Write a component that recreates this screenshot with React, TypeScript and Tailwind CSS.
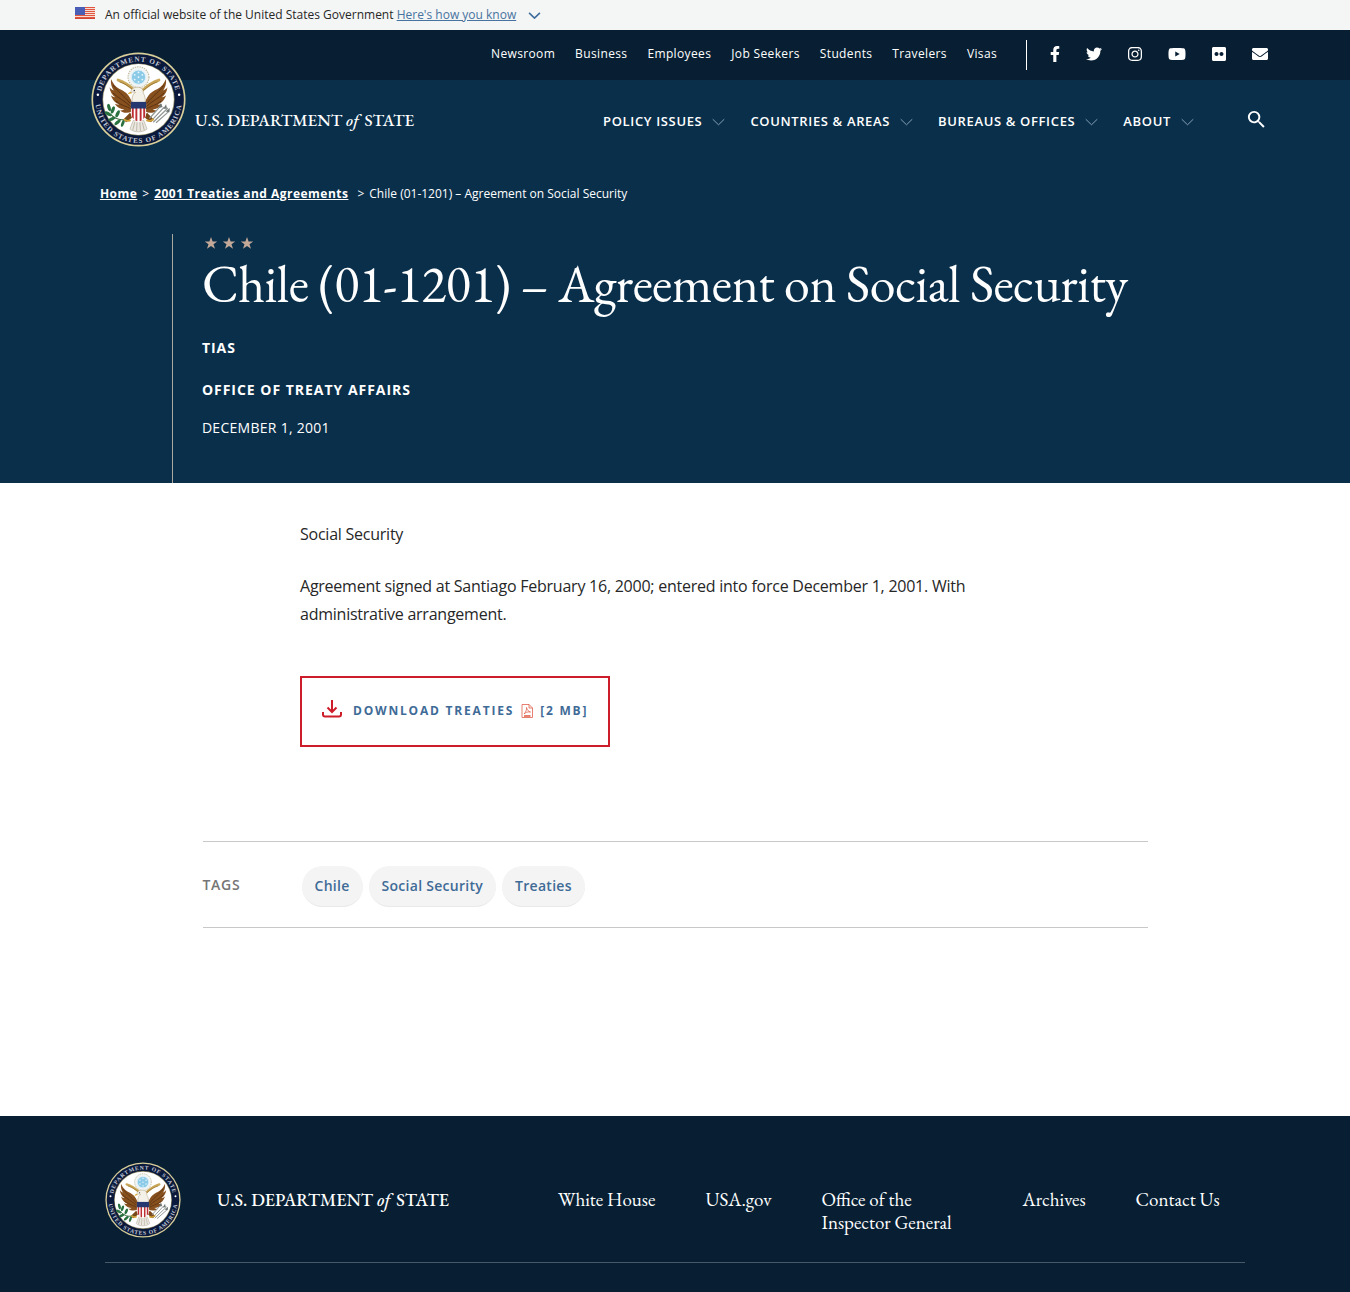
import React, { useId } from "react";
import { FaFacebookF, FaTwitter, FaInstagram, FaYoutube, FaFlickr, FaEnvelope } from "react-icons/fa";
import { MdSearch } from "react-icons/md";

const serif = "font-['EB_Garamond','Liberation_Serif',serif]";

function Flag() {
  return (
    <svg viewBox="0 0 20 12" className="mb-1 h-3 w-5 shrink-0" aria-hidden="true">
      <rect width="20" height="12" fill="#f6dcd4" />
      {[0, 2, 4, 6, 8, 10].map((y) => (
        <rect key={y} y={y} width="20" height="1" fill="#e0563f" />
      ))}
      <rect y="11" width="20" height="1" fill="#cf4436" />
      <rect width="10" height="8" fill="#3a4fae" />
      {[1, 3, 5, 7].map((y) =>
        [1, 3, 5, 7, 9].map((x) => <circle key={`${x}-${y}`} cx={x} cy={y} r="0.4" fill="#cfd6f5" />)
      )}
    </svg>
  );
}

function Chevron({ className, width = 1 }: { className: string; width?: number }) {
  return (
    <svg viewBox="0 0 14 8" className={className} fill="none" stroke="currentColor" strokeWidth={width} aria-hidden="true">
      <path d="M.8 1 7 7l6.200-6" />
    </svg>
  );
}

function Seal({ className }: { className: string }) {
  const id = useId();
  const wing =
    "M88 112C84 96 76 84 60 78 52 74 46 66 42 57 41 68 44 76 48 81 43 79 41 77 39 74 40 84 45 91 51 95 47 95 44 93 42 91 45 101 52 108 59 110 56 111 53 110 50 109 55 117 63 121 70 121 67 123 64 123 61 123 68 129 78 129 86 125Z";
  const feathers = "M47 70C56 84 68 90 84 110M46 86C58 98 70 102 85 116M52 103C62 112 74 114 85 120";
  return (
    <svg viewBox="0 0 200 200" className={className} role="img" aria-label="Seal of the U.S. Department of State">
      <circle cx="100" cy="100" r="99" fill="#d9cf9a" />
      <circle cx="100" cy="100" r="95.500" fill="#0b1a3c" />
      <circle cx="100" cy="100" r="76" fill="#8b865f" />
      <circle cx="100" cy="100" r="74.500" fill="#fff" />
      <defs>
        <path id={`${id}t`} d="M20 100A80 80 0 0 1 180 100" />
        <path id={`${id}b`} d="M9.400 92A91 91 0 1 0 190.600 92" />
      </defs>
      <g fill="#c3cad8" fontFamily="Liberation Serif, serif" fontWeight="700" fontSize="15" textAnchor="middle">
        <text letterSpacing="2">
          <textPath href={`#${id}t`} startOffset="50%">DEPARTMENT OF STATE</textPath>
        </text>
        <text letterSpacing="2">
          <textPath href={`#${id}b`} startOffset="50%">UNITED STATES OF AMERICA</textPath>
        </text>
      </g>
      <circle cx="14.500" cy="90" r="2.600" fill="#fff" />
      <circle cx="185.500" cy="90" r="2.600" fill="#fff" />
      <circle cx="100" cy="53" r="22" fill="#f1f4f4" stroke="#c3bda0" strokeWidth="2.500" strokeDasharray="3 2" />
      <circle cx="100" cy="53" r="15" fill="#8ccbe8" stroke="#dff1f9" strokeWidth="2" />
      <g fill="#e9f6fc">
        {[[100, 43], [92, 48], [108, 48], [100, 53], [92, 58], [108, 58], [100, 63]].map(([x, y]) => (
          <circle key={`${x}-${y}`} cx={x} cy={y} r="1.900" />
        ))}
      </g>
      <path d="M57 59c10 3 21 9 34 21M143 59c-10 3-21 9-34 21" fill="none" stroke="#c9a757" strokeWidth="6" strokeLinecap="round" />
      <path d="M60 63c10 3 19 8 30 18M140 63c-10 3-19 8-30 18" fill="none" stroke="#8e6b2b" strokeWidth="1.500" />
      <g>
        <path d={wing} fill="#87501f" />
        <path d={feathers} fill="none" stroke="#5a3210" strokeWidth="2" />
        <g transform="translate(200 0) scale(-1 1)">
          <path d={wing} fill="#87501f" />
          <path d={feathers} fill="none" stroke="#5a3210" strokeWidth="2" />
        </g>
      </g>
      <path d="M82 128 68 142l6 6 16-12ZM118 128l14 14-6 6-16-12Z" fill="#7a4718" />
      <path d="M89 144h22l7 18c-9 8-27 8-36 0Z" fill="#ece9e2" stroke="#aaa493" strokeWidth="1.200" />
      <path d="M92 148l-4 16M97 148l-1 18M103 148l1 18M108 148l4 16" stroke="#aaa493" strokeWidth="1.500" />
      <path d="M87 108c-2-12 1-20 7-23-4 0-7-2-10 1-1-7 5-12 14-12 8 0 13 5 12 13 4 5 5 12 4 21Z" fill="#f4f1e8" stroke="#9f8e66" strokeWidth="1" />
      <path d="M84 84c-4 0-6 2-6 5 3-2 6-2 8-1Z" fill="#d9a520" />
      <circle cx="91" cy="81" r="1.500" fill="#222" />
      <path d="M84 107h32v23c0 10-8 15-16 18-8-3-16-8-16-18Z" fill="#fff" />
      <path d="M86 117v20l4 4v-24ZM93.500 117v27l4 2v-29ZM102.500 117v29l4-2v-27ZM110 117v24l4-4v-20Z" fill="#bd2f34" />
      <path d="M84 105h32v14H84Z" fill="#27376f" />
      <path d="M76 141c-14 4-25 1-35-10" fill="none" stroke="#3f6b3b" strokeWidth="2.500" />
      <g fill="#29713f">
        <ellipse cx="38" cy="117" rx="3.500" ry="8" transform="rotate(-15 38 117)" />
        <ellipse cx="46" cy="122" rx="3.500" ry="8" transform="rotate(20 46 122)" />
        <ellipse cx="36" cy="130" rx="3.500" ry="8" transform="rotate(-60 36 130)" />
        <ellipse cx="56" cy="130" rx="3.500" ry="8" transform="rotate(25 56 130)" />
        <ellipse cx="44" cy="141" rx="3.500" ry="8" transform="rotate(65 44 141)" />
        <ellipse cx="56" cy="148" rx="3.500" ry="8" transform="rotate(50 56 148)" />
        <ellipse cx="67" cy="150" rx="3" ry="8" transform="rotate(20 67 150)" />
      </g>
      <path d="M126 146l28-30M131 148l31-30M123 140l26-29M137 149l27-24" stroke="#8f9694" strokeWidth="2.500" />
      <path d="M146 108l5 8-8 2ZM158 110l2 9-8 1ZM166 118l-1 9-8-2Z" fill="#6f7776" />
      <path d="M70 142c4 3 8 4 12 2M118 144c4 2 9 1 13-2" fill="none" stroke="#d0a13a" strokeWidth="4" strokeLinecap="round" />
    </svg>
  );
}

function Wordmark({ size }: { size: string }) {
  return (
    <span className={`${serif} ${size} whitespace-nowrap font-medium leading-none`}>
      U.S. DEPARTMENT <i className="mr-0.5">of</i> STATE
    </span>
  );
}

const topLinks = ["Newsroom", "Business", "Employees", "Job Seekers", "Students", "Travelers", "Visas"];
const menus = ["POLICY ISSUES", "COUNTRIES & AREAS", "BUREAUS & OFFICES", "ABOUT"];
const social = [
  { label: "Facebook", icon: <FaFacebookF className="h-4 w-[10px]" /> },
  { label: "Twitter", icon: <FaTwitter className="h-4 w-4" /> },
  { label: "Instagram", icon: <FaInstagram className="h-4 w-[14px]" /> },
  { label: "YouTube", icon: <FaYoutube className="h-4 w-[18px]" /> },
  { label: "Flickr", icon: <FaFlickr className="h-4 w-[14px]" /> },
  { label: "Email", icon: <FaEnvelope className="h-4 w-4" /> },
];

function Header() {
  return (
    <header className="relative">
      <div className="bg-[#081f33]">
        <div className="mx-auto flex h-[50px] max-w-[1200px] items-center justify-end pr-[7px]">
          <nav aria-label="Audience" className="flex gap-5 pb-[2px] text-xs tracking-[0.03em]">
            {topLinks.map((t) => (
              <a key={t} href="#">{t}</a>
            ))}
          </nav>
          <div className="ml-[29px] flex h-[30px] items-center gap-[26px] border-l border-white pb-[2px] pl-[23px]">
            {social.map((s) => (
              <a key={s.label} href="#" aria-label={s.label}>{s.icon}</a>
            ))}
          </div>
        </div>
      </div>
      <div className="relative mx-auto flex h-[82px] max-w-[1200px] items-center justify-between pr-[7px]">
        <a href="#" className="pb-0.5 pl-[120px]">
          <Seal className="absolute -top-7 left-4 h-[95px] w-[95px]" />
          <Wordmark size="text-[17px]" />
        </a>
        <nav aria-label="Main" className="flex items-center gap-[25px] pt-0.5 text-[13px] font-semibold tracking-wider">
          {menus.map((m) => (
            <button key={m} type="button" className="flex items-center gap-[10px]">
              {m}
              <Chevron className="h-2 w-[13px] text-[#8fa9bd]" />
            </button>
          ))}
          <button type="button" aria-label="Search" className="ml-[26px] pb-1.5">
            <MdSearch className="h-[23px] w-[23px]" />
          </button>
        </nav>
      </div>
    </header>
  );
}

function Hero() {
  return (
    <section className="px-[7.4%]">
      <nav aria-label="Breadcrumb" className="flex h-16 items-center gap-[5px] text-xs">
        <a href="#" className="font-bold tracking-[0.04em] underline">Home</a>
        <span>&gt;</span>
        <a href="#" className="mr-1 font-bold tracking-[0.04em] underline">2001 Treaties and Agreements</a>
        <span>&gt;</span>
        <span>Chile (01-1201) – Agreement on Social Security</span>
      </nav>
      <div className="ml-[72px] mt-2 min-h-[249px] border-l border-[#a9a9a0] pl-[29px]">
        <svg viewBox="0 0 54 18" className="h-[18px] w-[54px] fill-[#c4a898]" aria-hidden="true">
          {[0, 18, 36].map((x) => (
            <path key={x} transform={`translate(${x} 0)`} d="M9 3l1.600 4.500h4.600l-3.700 2.700 1.500 4.600L9 12l-4 2.800 1.500-4.600L2.800 7.500h4.600Z" />
          ))}
        </svg>
        <h1 className={`${serif} text-[52px] leading-[64px] tracking-[-0.01em]`}>Chile (01-1201) – Agreement on Social Security</h1>
        <p className="mt-[22px] text-sm font-bold tracking-[0.07em]">TIAS</p>
        <p className="mt-[22px] text-sm font-bold tracking-[0.07em]">
          <a href="#">OFFICE OF TREATY AFFAIRS</a>
        </p>
        <p className="mt-[18px] text-sm tracking-[0.02em]">DECEMBER 1, 2001</p>
      </div>
    </section>
  );
}

function Download() {
  return (
    <a href="#" className="mt-12 inline-flex h-[71px] items-center border-2 border-[#cd1d2a] px-5 pb-[2px] text-xs font-bold tracking-[0.15em] text-[#3f6b97]">
      <svg viewBox="0 0 20 18" className="mb-1 mr-[11px] h-[18px] w-5" fill="none" stroke="#cd1d2a" strokeWidth="2" aria-hidden="true">
        <path d="M10 0v12M5.500 7.500 10 12l4.500-4.500M1 12v2.500A2 2 0 0 0 3 16.500h14a2 2 0 0 0 2-2V12" />
      </svg>
      DOWNLOAD TREATIES
      <svg viewBox="0 0 12 14" className="mx-[7px] h-[14px] w-3" fill="none" stroke="#e0614d" aria-hidden="true">
        <path d="M1 .5h7l3.500 3.500v9.500H1ZM8 .5V4h3.500" strokeWidth=".8" />
        <path d="M5.500 3.500c1 3 2 4 4 4.500-3-.5-5 .5-6.500 2C4.500 8.500 6 5.500 5.500 3.500Z" strokeWidth=".8" />
        <path d="M3 12h6.500" strokeWidth="1.600" />
      </svg>
      [2 MB]
    </a>
  );
}

const footerLinks = [
  { label: "White House", wrap: false },
  { label: "USA.gov", wrap: false },
  { label: "Office of the Inspector General", wrap: true },
  { label: "Archives", wrap: false },
  { label: "Contact Us", wrap: false },
];

export default function App() {
  return (
    <div className="bg-white font-['Open_Sans',sans-serif] text-[#272727]">
      <div className="bg-[#f4f5f5]">
        <div className="mx-auto flex h-[30px] max-w-[1200px] items-center text-xs">
          <Flag />
          <p className="ml-[10px]">
            An official website of the United States Government{" "}
            <button type="button" className="text-[#4773a0] underline">Here's how you know</button>
          </p>
          <Chevron width={1.8} className="ml-3 mt-px h-[7px] w-[13px] text-[#3f6d9b]" />
        </div>
      </div>
      <div className="bg-[#0a2f4b] text-white">
        <Header />
        <Hero />
      </div>
      <main>
        <article className="mx-auto max-w-[750px] pt-[37px] leading-7 tracking-[-0.015em]">
          <p>Social Security</p>
          <p className="mt-6 max-w-[690px]">
            Agreement signed at Santiago February 16, 2000; entered into force December 1, 2001. With administrative arrangement.
          </p>
          <Download />
        </article>
        <section className="mx-auto mt-[94px] flex w-[70%] items-center border-y border-[#c6c8c9] pb-5 pt-6 text-sm">
          <h2 className="w-[99px] pb-1 font-semibold tracking-wider text-[#757575]">TAGS</h2>
          <ul className="flex gap-[6px] font-semibold tracking-[0.02em] text-[#3f6b97]">
            {["Chile", "Social Security", "Treaties"].map((t) => (
              <li key={t}>
                <a href="#" className="block rounded-full border-b border-[#e9e9e9] bg-[#f4f4f4] px-[13px] py-[10px]">{t}</a>
              </li>
            ))}
          </ul>
        </section>
      </main>
      <footer className="mt-[188px] bg-[#081f33] pb-[29px] text-white">
        <div className="mx-auto flex max-w-[1140px] items-start border-b border-[#46596a] pb-6 pt-[46px]">
          <Seal className="h-[76px] w-[76px] shrink-0" />
          <div className="ml-9 mt-[26px] w-[341px] shrink-0">
            <Wordmark size="text-lg" />
          </div>
          <nav aria-label="Footer" className={`${serif} mt-[26px] flex gap-[50px] text-[19px] leading-[23px]`}>
            {footerLinks.map((l) => (
              <a key={l.label} href="#" className={l.wrap ? "w-[151px]" : "whitespace-nowrap"}>{l.label}</a>
            ))}
          </nav>
        </div>
      </footer>
    </div>
  );
}
